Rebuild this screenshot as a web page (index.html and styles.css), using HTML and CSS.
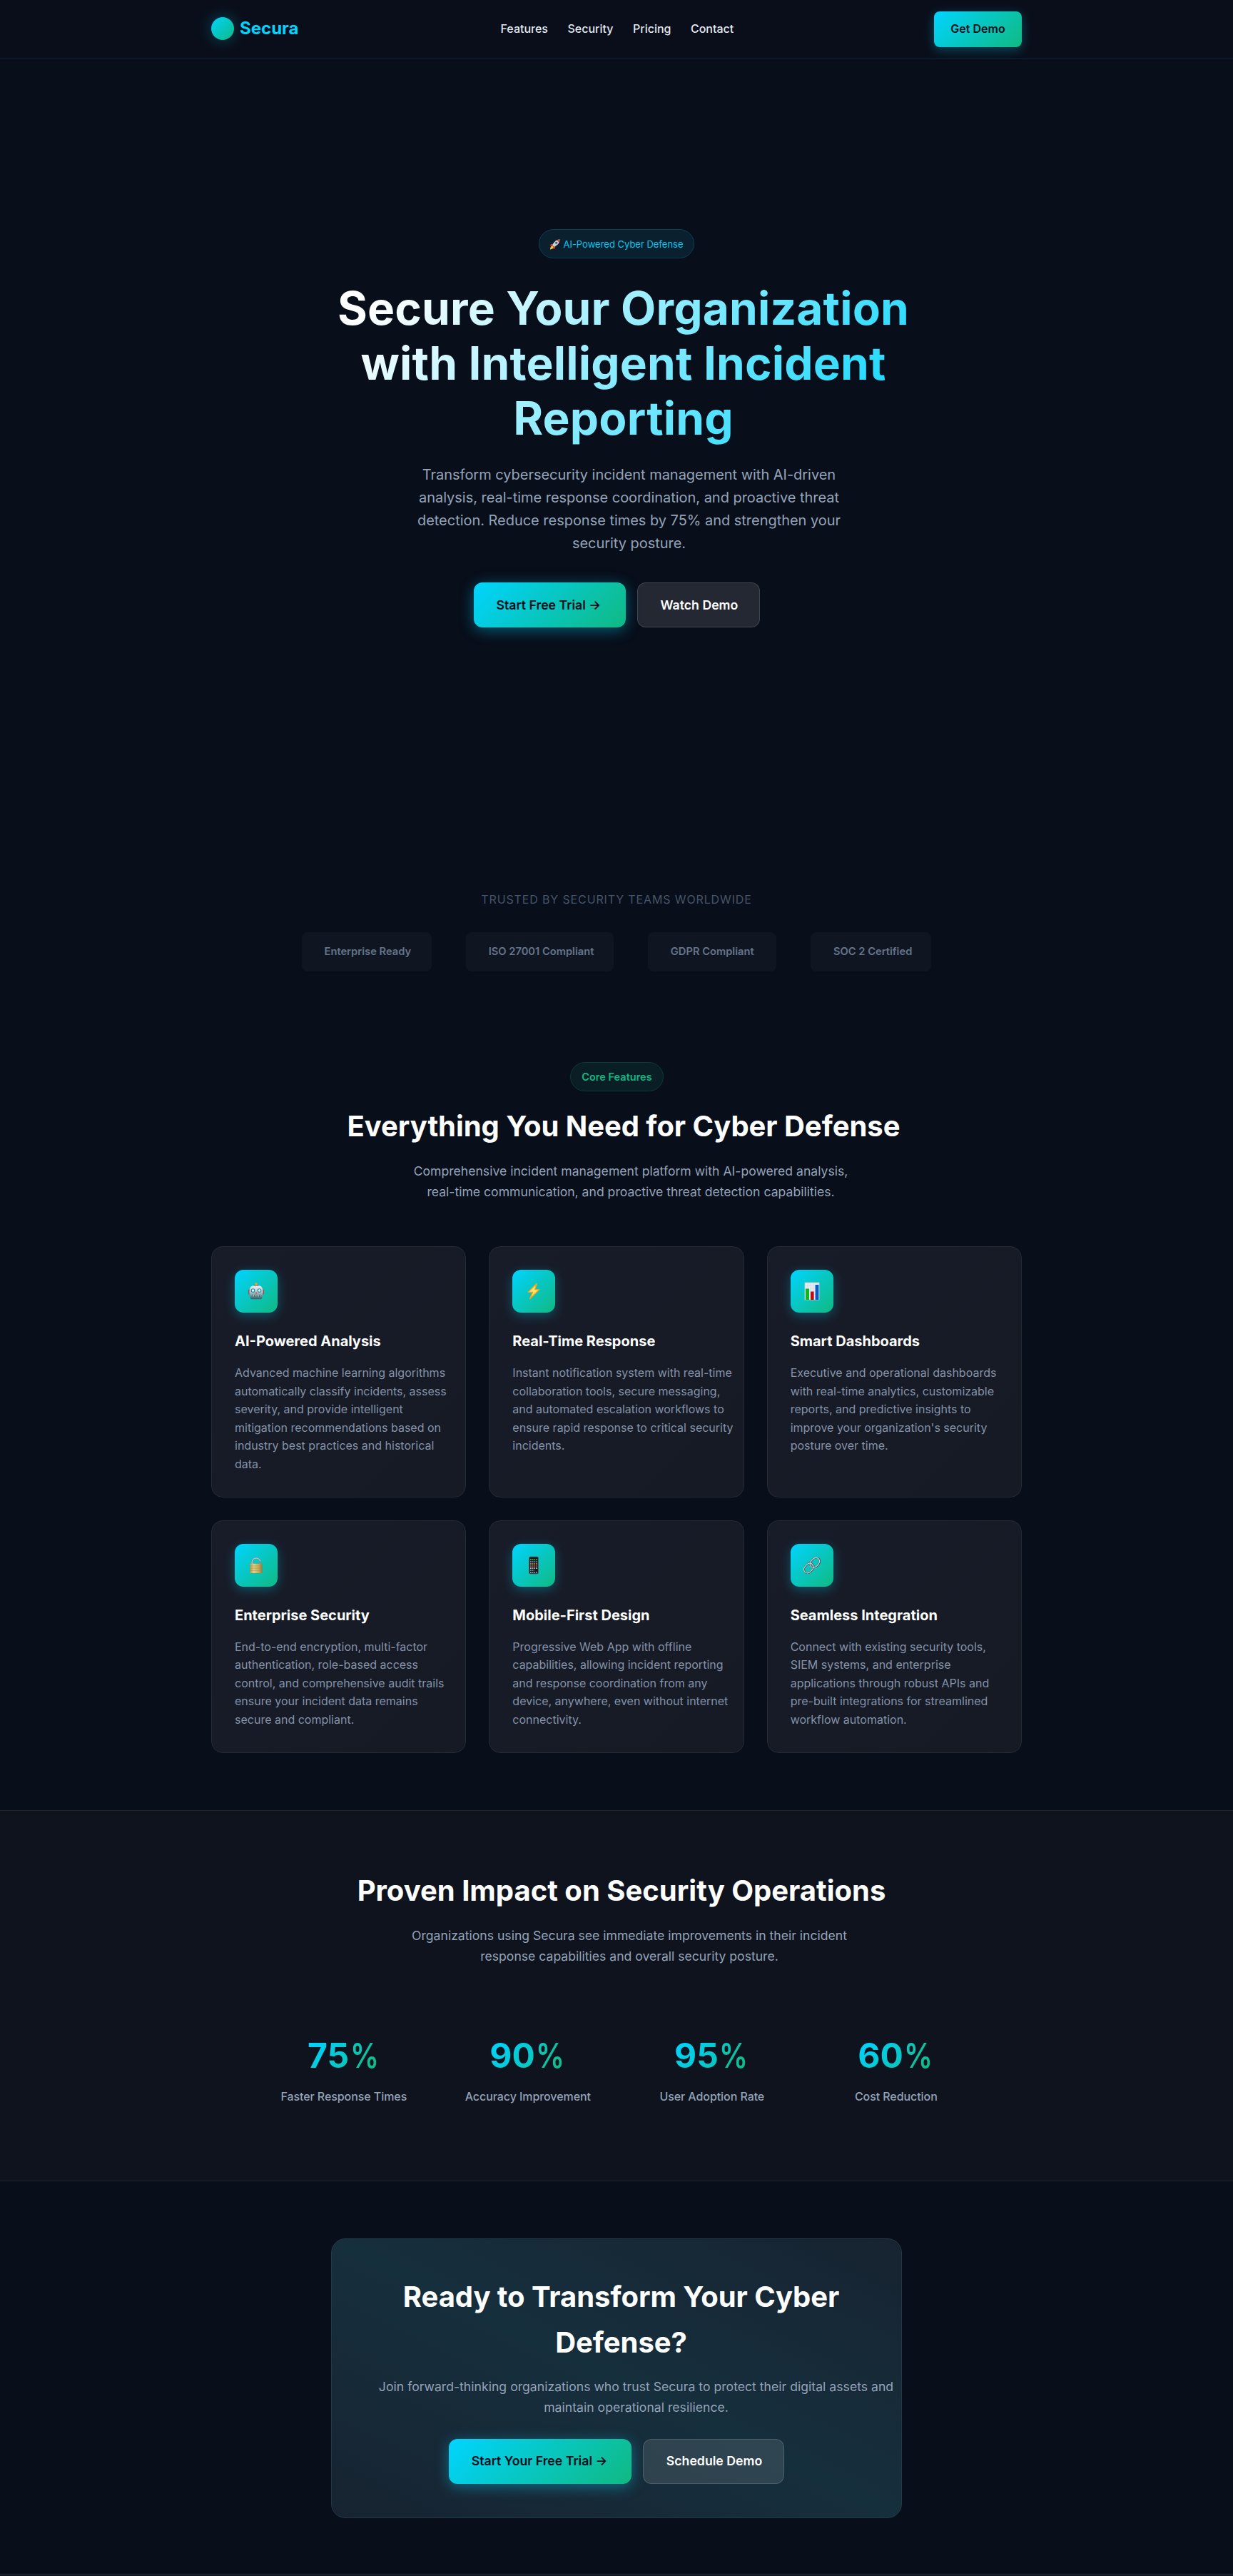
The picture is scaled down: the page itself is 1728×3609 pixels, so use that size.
FILE: index.html
```
<!DOCTYPE html>
<html lang="en">
<head>
<meta charset="utf-8">
<title>Secura – Intelligent Incident Reporting</title>
<link rel="stylesheet" href="styles.css">
</head>
<body>
<header class="header">
  <div class="header-inner">
    <div class="brand"><span class="brand-mark"></span><span>Secura</span></div>
    <nav class="nav"><a>Features</a><a>Security</a><a>Pricing</a><a>Contact</a></nav>
    <a class="btn-demo">Get Demo</a>
  </div>
</header>

<section class="hero">
  <div class="badge badge-hero"><svg class="badge-emoji" width="15" height="15" viewBox="0 0 15 15"><path d="M1 14.500C1 11 2.500 9.500 4.200 9.500L6 11.300C5.500 13 4 14 1 14.500z" fill="#ffc52e"/><path d="M5 6.500L1.800 7.200 1 10l3.500-1zM8.500 10l-.7 3.200L5 14l1-3.500z" fill="#e0322c"/><path d="M14.500.500C10.500.500 7 2.500 4 8.700l2.300 2.300C12.500 8 14.500 4.500 14.500.500z" fill="#c9cdd4"/><path d="M14.500.500c-1.500 0-2.900.300-4.200.900l3.300 3.300c.600-1.300.900-2.700.900-4.200z" fill="#d9463c"/><circle cx="9.700" cy="5.300" r="1.500" fill="#3a5a78"/></svg><span>AI-Powered Cyber Defense</span></div>
  <h1 class="hero-title">Secure Your Organization<br>with Intelligent Incident<br>Reporting</h1>
  <p class="hero-text">Transform cybersecurity incident management with AI-driven<br>analysis, real-time response coordination, and proactive threat<br>detection. Reduce response times by 75% and strengthen your<br>security posture.</p>
  <div class="actions actions-hero"><a class="btn btn-primary">Start Free Trial →</a><a class="btn btn-ghost">Watch Demo</a></div>
</section>

<section class="trusted">
  <p class="trusted-label">TRUSTED BY SECURITY TEAMS WORLDWIDE</p>
  <div class="trusted-row">
    <span class="chip chip-a">Enterprise Ready</span>
    <span class="chip chip-b">ISO 27001 Compliant</span>
    <span class="chip chip-c">GDPR Compliant</span>
    <span class="chip chip-d">SOC 2 Certified</span>
  </div>
</section>

<section class="features">
  <div class="badge badge-core">Core Features</div>
  <h2 class="title title-features">Everything You Need for Cyber Defense</h2>
  <p class="lead lead-features">Comprehensive incident management platform with AI-powered analysis,<br>real-time communication, and proactive threat detection capabilities.</p>
  <div class="grid">
    <article class="card"><div class="card-icon"><svg width="22" height="24" viewBox="0 0 22 24"><defs><linearGradient id="steel" x2="0" y2="1"><stop offset="0" stop-color="#eef4f5"/><stop offset=".5" stop-color="#a9c3c8"/><stop offset="1" stop-color="#2f5f69"/></linearGradient></defs><rect y="9.500" width="3" height="7" rx="1.500" fill="#b8433f"/><rect x="19" y="9.500" width="3" height="7" rx="1.500" fill="#b8433f"/><rect x="8.500" y="2.500" width="5" height="3" rx="1" fill="#8a3f78"/><circle cx="11" cy="2" r="1.900" fill="#f59c2b"/><path d="M5.500 4.500h11c2.500 1 4 4 4 8 0 3-.500 5.500-1.300 9-.2 1-1 1.700-2 1.700H4.800c-1 0-1.800-.7-2-1.700C2 18 1.500 15.500 1.500 12.500c0-4 1.500-7 4-8z" fill="url(#steel)"/><g fill="#fff" stroke="#178fb0" stroke-width="1.100"><circle cx="6.500" cy="11" r="2.300"/><circle cx="15.500" cy="11" r="2.300"/></g><path d="M11 12.500l1.400 3H9.600z" fill="#e23b35"/><path d="M6.500 18.500h9" stroke="#234a53" stroke-width="3"/><path d="M7 18.500h8" stroke="#e9eff0" stroke-width="1.800" stroke-dasharray="1.300 .9"/></svg></div><h3>AI-Powered Analysis</h3><p>Advanced machine learning algorithms<br>automatically classify incidents, assess<br>severity, and provide intelligent<br>mitigation recommendations based on<br>industry best practices and historical<br>data.</p></article>
    <article class="card"><div class="card-icon"><svg width="18" height="24" viewBox="0 0 18 24"><path d="M13.300 1L1.200 13.200l6.300.2L3.500 22.800 16.800 9.700l-6-.3z" fill="#ffe36a" stroke="#f2a21c" stroke-width="1.400" stroke-linejoin="round"/></svg></div><h3>Real-Time Response</h3><p>Instant notification system with real-time<br>collaboration tools, secure messaging,<br>and automated escalation workflows to<br>ensure rapid response to critical security<br>incidents.</p></article>
    <article class="card"><div class="card-icon"><svg width="22" height="26" viewBox="0 0 22 26"><rect x="1" y="1" width="20" height="24" fill="#e4eaf1" stroke="#c3ced8" stroke-width=".8"/><path d="M1 5h20M1 9h20M1 13h20M1 17h20M1 21h20M5 1v24M9 1v24M13 1v24M17 1v24" stroke="#cfd8e3" stroke-width=".5"/><path d="M2 9.500h5V25H2z" fill="#0cb81f"/><path d="M9 13.500h4.600V25H9z" fill="#c20a10"/><path d="M15.600 4h4.800v21h-4.800z" fill="#0a5cc4"/></svg></div><h3>Smart Dashboards</h3><p>Executive and operational dashboards<br>with real-time analytics, customizable<br>reports, and predictive insights to<br>improve your organization's security<br>posture over time.</p></article>
    <article class="card"><div class="card-icon"><svg width="22" height="24" viewBox="0 0 22 26"><defs><linearGradient id="brass"><stop offset="0" stop-color="#b79b4c"/><stop offset=".3" stop-color="#e3cf83"/><stop offset=".7" stop-color="#c6ab5c"/><stop offset="1" stop-color="#94793a"/></linearGradient></defs><path d="M5 13V8a6 6 0 0 1 12 0v5" fill="none" stroke="#7f8d94" stroke-width="2.400"/><path d="M4.700 13V8a6.300 6.300 0 0 1 12.400-1" fill="none" stroke="#d3dade" stroke-width="1"/><rect x="1.700" y="10.500" width="18.600" height="14.500" rx="1" fill="url(#brass)"/><path d="M2 14h18M2 17.500h18M2 21h18" stroke="#9d8445" stroke-width=".5"/></svg></div><h3>Enterprise Security</h3><p>End-to-end encryption, multi-factor<br>authentication, role-based access<br>control, and comprehensive audit trails<br>ensure your incident data remains<br>secure and compliant.</p></article>
    <article class="card"><div class="card-icon"><svg width="14" height="26" viewBox="0 0 14 26"><rect x=".6" y="1.100" width="12.800" height="23.800" rx="1.500" fill="#16191d" stroke="#5b5f63" stroke-width="1"/><g stroke-width="1.700" stroke-dasharray="1.700 1"><path d="M2 5h10" stroke="#4fc863"/><path d="M2 8h10" stroke="#58a9ea"/><path d="M2 11h10" stroke="#f0a541"/><path d="M2 14h10" stroke="#e56170"/><path d="M2 17h10" stroke="#dde3e8"/><path d="M2 20h6" stroke="#55b9c9"/><path d="M2 23h10" stroke="#a8b6c0"/></g></svg></div><h3>Mobile-First Design</h3><p>Progressive Web App with offline<br>capabilities, allowing incident reporting<br>and response coordination from any<br>device, anywhere, even without internet<br>connectivity.</p></article>
    <article class="card"><div class="card-icon"><svg width="26" height="26" viewBox="0 0 26 26"><g fill="none"><g stroke="#4f585f" stroke-width="2.400"><rect x="9.800" y="4" width="15" height="10.500" rx="5.250" transform="rotate(-48 17.300 9.250)"/><rect x="1.200" y="11.700" width="15" height="10.500" rx="5.250" transform="rotate(-48 8.700 17)"/></g><g stroke="#cfd5da" stroke-width="1.100"><rect x="9.500" y="3.700" width="15" height="10.500" rx="5.250" transform="rotate(-48 17.300 9.250)"/><rect x=".9" y="11.400" width="15" height="10.500" rx="5.250" transform="rotate(-48 8.700 17)"/></g></g></svg></div><h3>Seamless Integration</h3><p>Connect with existing security tools,<br>SIEM systems, and enterprise<br>applications through robust APIs and<br>pre-built integrations for streamlined<br>workflow automation.</p></article>
  </div>
</section>

<section class="stats">
  <h2 class="title title-stats">Proven Impact on Security Operations</h2>
  <p class="lead lead-stats">Organizations using Secura see immediate improvements in their incident<br>response capabilities and overall security posture.</p>
  <div class="stats-row">
    <div class="stat"><div class="stat-value"><span>75</span><i>%</i></div><div class="stat-label">Faster Response Times</div></div>
    <div class="stat"><div class="stat-value"><span>90</span><i>%</i></div><div class="stat-label">Accuracy Improvement</div></div>
    <div class="stat"><div class="stat-value"><span>95</span><i>%</i></div><div class="stat-label">User Adoption Rate</div></div>
    <div class="stat"><div class="stat-value"><span>60</span><i>%</i></div><div class="stat-label">Cost Reduction</div></div>
  </div>
</section>

<section class="cta-wrap">
  <div class="cta">
    <h2 class="title title-cta">Ready to Transform Your Cyber<br>Defense?</h2>
    <p class="lead lead-cta">Join forward-thinking organizations who trust Secura to protect their digital assets and<br>maintain operational resilience.</p>
    <div class="actions"><a class="btn btn-primary btn-cta">Start Your Free Trial →</a><a class="btn btn-ghost btn-schedule">Schedule Demo</a></div>
  </div>
</section>
<footer class="footer"></footer>
</body>
</html>
```
FILE: styles.css
```
* { box-sizing: border-box; margin: 0; padding: 0; }
body {
  background: #080e1a;
  color: #fff;
  font: 400 16px/1.6 Inter, "Liberation Sans", sans-serif;
  white-space: nowrap;
  overflow-x: hidden;
}

.header { height: 82px; background: #0a0e1a; border-bottom: 1px solid #0a2635; }
.header-inner { width: 1136px; height: 81px; margin: 0 auto; display: flex; align-items: center; }
.brand { width: 405.500px; display: flex; align-items: center; gap: 8px; color: #00d4ff; font-size: 24px; font-weight: 700; }
.brand-mark { width: 32px; height: 32px; border-radius: 50%; background: linear-gradient(135deg, #00d4ff, #10b981); box-shadow: 0 0 20px rgba(0, 212, 255, .3); }
.nav { flex: 1; display: flex; gap: 27.500px; color: #e2e8f0; font-weight: 500; }
.btn-demo { width: 123px; height: 50px; display: flex; align-items: center; justify-content: center; border-radius: 8px; background: linear-gradient(135deg, #00d4ff, #10b981); box-shadow: 0 4px 15px rgba(0, 212, 255, .3); color: #0a0e1a; font-weight: 600; }

.hero { height: 1118px; padding-top: 239px; display: flex; flex-direction: column; align-items: center; text-align: center; }
.badge { display: flex; align-items: center; justify-content: center; height: 41px; border: 1px solid; border-radius: 21px; }
.badge-hero { width: 218px; gap: 4px; padding-top: 1px; border-color: #0a4252; background: #0a202f; color: #00c8f0; font-size: 13px; }
.hero-title { margin-top: 32px; padding-left: 19px; font-size: 64px; font-weight: 700; line-height: 76.8px; letter-spacing: .14px; background: linear-gradient(135deg, #fff 10%, #00d4ff 100%); -webkit-background-clip: text; background-clip: text; color: transparent; }
.hero-text { margin-top: 24.600px; padding-left: 35px; color: #94a3b8; font-size: 20px; line-height: 32px; letter-spacing: -.03px; }
.actions { display: flex; justify-content: center; gap: 16px; }
.actions-hero { margin-top: 39.400px; }
.btn { height: 63px; display: flex; align-items: center; padding: 0 32px; border-radius: 12px; font-size: 17.7px; font-weight: 600; }
.btn-primary { width: 213px; background: linear-gradient(135deg, #00d4ff, #10b981); box-shadow: 0 4px 20px rgba(0, 212, 255, .4); color: #0a0e1a; }
.btn-ghost { width: 172px; background: rgba(255, 255, 255, .11); border: 1px solid rgba(255, 255, 255, .14); color: #fff; }

.trusted { height: 208px; padding-top: 48px; display: flex; flex-direction: column; align-items: center; }
.trusted-label { color: #475569; letter-spacing: .87px; }
.trusted-row { margin-top: 32px; width: 883px; display: flex; justify-content: space-between; }
.chip { height: 55px; display: flex; align-items: center; padding: 1px 0 0 32px; border-radius: 8px; background: #101621; color: #64748b; font-size: 14.700px; font-weight: 600; }
.chip-a { width: 182px; } .chip-b { width: 207px; } .chip-c { width: 180px; } .chip-d { width: 169.500px; }

.features { padding: 80px 296px; display: flex; flex-direction: column; align-items: center; text-align: center; }
.badge-core { width: 131px; padding-left: 1px; border-color: #0c3a36; background: #0a1f25; color: #10b981; font-size: 14.5px; font-weight: 600; }
.title { font-size: 40px; font-weight: 700; line-height: 64px; }
.title-features { margin-top: 17px; padding-left: 20px; letter-spacing: -.05px; }
.lead { color: #94a3b8; font-size: 17.6px; line-height: 29px; }
.lead-features { margin-top: 15.500px; padding-left: 40px; }
.grid { width: 1136px; margin-top: 62.500px; display: grid; grid-template-columns: repeat(3, minmax(0, 1fr)); gap: 32px; text-align: left; }
.card { padding: 32px; border: 1px solid #252a35; border-radius: 16px; background: linear-gradient(135deg, #181c28, #151a25); }
.card-icon { width: 60px; height: 60px; display: flex; align-items: center; justify-content: center; border-radius: 12px; background: linear-gradient(135deg, #00d4ff, #10b981); box-shadow: 0 4px 15px rgba(0, 212, 255, .3); }
.card h3 { margin: 24px 0 16px; font-size: 20px; line-height: 32px; font-weight: 700; }
.card p { color: #8492a8; line-height: 25.6px; }

.stats { height: 520.4px; padding-top: 80.500px; border-top: 1px solid #20242f; border-bottom: 1px solid #20242f; background: #0f131e; display: flex; flex-direction: column; align-items: center; text-align: center; }
.title-stats { padding-left: 14px; }
.lead-stats { margin-top: 15.500px; padding-left: 36px; }
.stats-row { width: 1041.600px; margin-top: 86.500px; padding-left: 9.600px; display: grid; grid-template-columns: repeat(4, minmax(0, 1fr)); }
.stat-value { display: flex; justify-content: center; padding-right: 6px; font-size: 48px; font-weight: 700; line-height: 77px; }
.stat-value span { background: linear-gradient(135deg, #00d4ff 15%, #0bc3b4 90%); -webkit-background-clip: text; background-clip: text; color: transparent; }
/* The percent sign is set narrower than the digits; the box is kept wider than its slot so the glyph is not clipped. */
.stat-value i { width: 52px; margin: 0 -16px 0 1.500px; text-align: left; font-style: normal; font-weight: 600; transform: scaleX(.83); transform-origin: left; background: linear-gradient(135deg, #0bc8c0 15%, #10bb88 75%); -webkit-background-clip: text; background-clip: text; color: transparent; }
.stat-label { margin-top: 7px; color: #94a3b8; font-weight: 500; letter-spacing: -.07px; }

.cta-wrap { padding: 80px 0 79px; }
.cta { width: 800px; height: 392.500px; margin: 0 auto; padding-top: 49px; border: 1px solid #253845; border-radius: 20px; background: linear-gradient(to top right, #172331, #162f3d 50%, #172331); text-align: center; }
.title-cta { padding-left: 13px; letter-spacing: -.05px; }
.lead-cta { margin-top: 15px; padding-left: 55px; letter-spacing: .02px; }
.cta .actions { margin-top: 30px; }
.btn-cta { width: 256px; }
.btn-schedule { width: 198.500px; }
.footer { height: 1px; background: #3b4048; }
```
